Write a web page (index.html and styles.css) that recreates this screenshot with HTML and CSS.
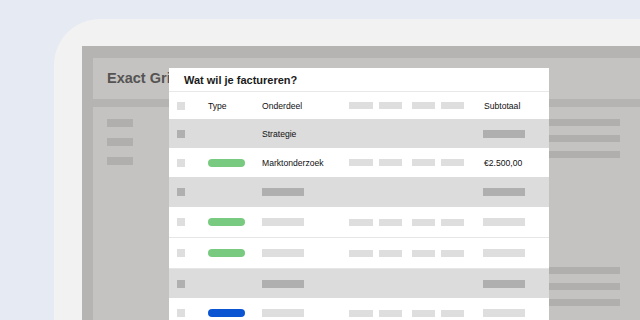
FILE: index.html
```html
<!DOCTYPE html>
<html>
<head>
  <link rel="stylesheet" href="styles.css">
</head>
<body>
  <div class="device">
    <div class="screen">
      <div class="app-top">Exact Grip</div>
      <div class="app-body">
        <div class="nav">
          <div class="nav-bar"></div>
          <div class="nav-bar"></div>
          <div class="nav-bar"></div>
        </div>
        <div class="side">
          <div class="side-group">
            <div class="side-bar"></div>
            <div class="side-bar"></div>
            <div class="side-bar"></div>
          </div>
          <div class="side-group">
            <div class="side-bar"></div>
            <div class="side-bar"></div>
            <div class="side-bar"></div>
          </div>
        </div>
      </div>

      <div class="modal">
        <div class="modal-title">Wat wil je factureren?</div>
        <div class="row head">
          <span class="check"></span>
          <span>Type</span>
          <span>Onderdeel</span>
          <span class="bar w24"></span>
          <span class="bar"></span>
          <span class="bar"></span>
          <span class="bar"></span>
          <span class="amount">Subtotaal</span>
        </div>
        <div class="row group">
          <span class="check"></span>
          <span></span>
          <span>Strategie</span>
          <span></span><span></span><span></span><span></span>
          <span class="long"></span>
        </div>
        <div class="row">
          <span class="check"></span>
          <span class="pill green"></span>
          <span>Marktonderzoek</span>
          <span class="bar w24"></span>
          <span class="bar"></span>
          <span class="bar"></span>
          <span class="bar"></span>
          <span class="amount">€2.500,00</span>
        </div>
        <div class="row group tall">
          <span class="check"></span>
          <span></span>
          <span class="long"></span>
          <span></span><span></span><span></span><span></span>
          <span class="long"></span>
        </div>
        <div class="row line">
          <span class="check"></span>
          <span class="pill green"></span>
          <span class="long"></span>
          <span class="bar w24"></span>
          <span class="bar"></span>
          <span class="bar"></span>
          <span class="bar"></span>
          <span class="long"></span>
        </div>
        <div class="row line">
          <span class="check"></span>
          <span class="pill green"></span>
          <span class="long"></span>
          <span class="bar w24"></span>
          <span class="bar"></span>
          <span class="bar"></span>
          <span class="bar"></span>
          <span class="long"></span>
        </div>
        <div class="row group">
          <span class="check"></span>
          <span></span>
          <span class="long"></span>
          <span></span><span></span><span></span><span></span>
          <span class="long"></span>
        </div>
        <div class="row line">
          <span class="check"></span>
          <span class="pill blue"></span>
          <span class="long"></span>
          <span class="bar w24"></span>
          <span class="bar"></span>
          <span class="bar"></span>
          <span class="bar"></span>
          <span class="long"></span>
        </div>
      </div>
    </div>
  </div>
</body>
</html>
```

FILE: styles.css
```css
body {
  margin: 0;
  height: 320px;
  overflow: hidden;
  background: #e6eaf2;
  font-family: "Liberation Sans", Arial, sans-serif;
}
.device {
  margin: 19px 0 0 54px;
  height: 400px;
  padding: 27px 0 0 28px;
  background: #f2f2f2;
  border-top-left-radius: 46px;
}
.screen {
  position: relative;
  height: 400px;
  padding: 12px 0 0 11px;
  background: #b5b4b2;
}
.app-top {
  height: 41px;
  line-height: 41px;
  padding-left: 14px;
  background: #c4c3c1;
  color: #555453;
  font-size: 14.5px;
  font-weight: bold;
}
.app-body {
  display: flex;
  justify-content: space-between;
  height: 300px;
  margin-top: 8px;
  background: #c4c3c1;
}
.nav {
  display: flex;
  flex-direction: column;
  gap: 11px;
  padding: 12px 0 0 14px;
}
.nav-bar {
  width: 26px;
  height: 8px;
  background: #b0afad;
}
.side {
  width: 140px;
  margin-right: 20px;
  padding-top: 12px;
}
.side-group {
  display: flex;
  flex-direction: column;
  gap: 9px;
}
.side-group + .side-group {
  margin-top: 109px;
}
.side-bar {
  height: 7px;
  background: #b0afad;
}

/* modal */
.modal {
  position: absolute;
  left: 87px;
  top: 22px;
  width: 380px;
  height: 300px;
  background: #fff;
}
.modal-title {
  height: 23px;
  line-height: 24px;
  padding-left: 15px;
  border-bottom: 1px solid #e8e8e8;
  color: #1a1a1a;
  font-size: 11px;
  font-weight: bold;
}
.row {
  display: grid;
  grid-template-columns: 31px 54px 87px 30px 33px 29px 42px 66px;
  align-items: center;
  height: 29px;
  box-sizing: border-box;
  padding-left: 8px;
  color: #111;
  font-size: 8.6px;
}
.row.head {
  height: 27px;
}
.row.tall {
  height: 30px;
}
.row.group {
  background: #dcdcdc;
}
.row.line {
  height: 31px;
  border-bottom: 1px solid #e6e6e6;
}
.check {
  width: 8px;
  height: 8px;
  background: #dedede;
}
.group .check {
  background: #b0b0b0;
}
.bar {
  width: 23px;
  height: 7px;
  background: #dedede;
}
.bar.w24 {
  width: 24px;
}
.long {
  width: 42px;
  height: 8px;
  background: #dedede;
}
.group .long {
  background: #afafaf;
}
.amount {
  padding-left: 1px;
}
.pill {
  width: 37px;
  height: 8px;
  border-radius: 4px;
}
.pill.green {
  background: #78ca80;
}
.pill.blue {
  background: #0b55d3;
}
```
